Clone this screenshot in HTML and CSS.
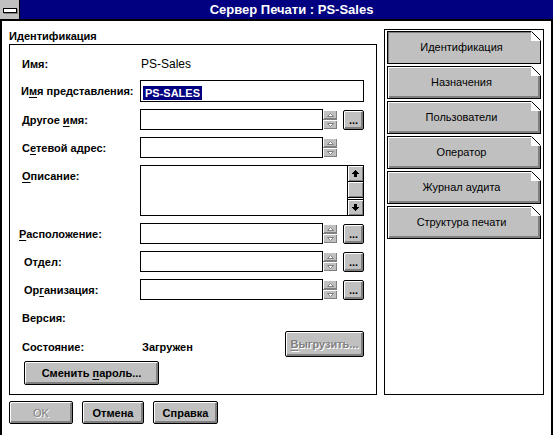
FILE: index.html
```html
<!DOCTYPE html>
<html lang="ru">
<head>
<meta charset="utf-8">
<title>Сервер Печати : PS-Sales</title>
<link rel="stylesheet" href="styles.css">
</head>
<body>
<div class="window">
  <div class="titlebar">
    <div class="sysmenu"><span class="sysbar"></span></div>
    <div class="title">Сервер Печати : PS-Sales</div>
  </div>
  <div class="client">
    <div class="left">
      <div class="group-label">Идентификация</div>
      <div class="group">
        <div class="row r-name"><span class="lbl">Имя:</span><span class="val">PS-Sales</span></div>
        <div class="row r-wide"><span class="lbl l-m1">И<u>м</u>я представления:</span><div class="field wide"><span class="sel">PS-SALES</span></div></div>
        <div class="row"><span class="lbl">Другое <u>и</u>мя:</span><div class="field"></div><div class="spin"><span class="spin-b"><svg width="7" height="4" viewBox="0 0 7 4"><path d="M3.5 0.5L6.5 3.5H0.5Z" fill="#fff" stroke="#808080"/></svg></span><span class="spin-b"><svg width="7" height="4" viewBox="0 0 7 4"><path d="M0.5 0.5H6.5L3.5 3.5Z" fill="#fff" stroke="#808080"/></svg></span></div><button class="btn ell">...</button></div>
        <div class="row"><span class="lbl">С<u>е</u>тевой адрес:</span><div class="field"></div><div class="spin"><span class="spin-b"><svg width="7" height="4" viewBox="0 0 7 4"><path d="M3.5 0.5L6.5 3.5H0.5Z" fill="#fff" stroke="#808080"/></svg></span><span class="spin-b"><svg width="7" height="4" viewBox="0 0 7 4"><path d="M0.5 0.5H6.5L3.5 3.5Z" fill="#fff" stroke="#808080"/></svg></span></div></div>
        <div class="row r-desc"><span class="lbl l-top"><u>О</u>писание:</span>
          <div class="memo">
            <div class="sb">
              <span class="sb-btn sb-up"><svg width="7" height="7" viewBox="0 0 7 7" shape-rendering="crispEdges"><path d="M3 0h1v1h1v1h1v1h1v1H5v3H2V4H0V3h1V2h1V1h1z"/></svg></span>
              <span class="sb-thumb"></span>
              <span class="sb-track"></span>
              <span class="sb-btn sb-down"><svg width="7" height="7" viewBox="0 0 7 7" shape-rendering="crispEdges"><path d="M2 0h3v3h2v1H6v1H5v1H4v1H3V6H2V5H1V4H0V3h2z"/></svg></span>
            </div>
          </div>
        </div>
        <div class="row"><span class="lbl l-m3"><u>Р</u>асположение:</span><div class="field"></div><div class="spin"><span class="spin-b"><svg width="7" height="4" viewBox="0 0 7 4"><path d="M3.5 0.5L6.5 3.5H0.5Z" fill="#fff" stroke="#808080"/></svg></span><span class="spin-b"><svg width="7" height="4" viewBox="0 0 7 4"><path d="M0.5 0.5H6.5L3.5 3.5Z" fill="#fff" stroke="#808080"/></svg></span></div><button class="btn ell">...</button></div>
        <div class="row"><span class="lbl l-p2">От<u>д</u>ел:</span><div class="field"></div><div class="spin"><span class="spin-b"><svg width="7" height="4" viewBox="0 0 7 4"><path d="M3.5 0.5L6.5 3.5H0.5Z" fill="#fff" stroke="#808080"/></svg></span><span class="spin-b"><svg width="7" height="4" viewBox="0 0 7 4"><path d="M0.5 0.5H6.5L3.5 3.5Z" fill="#fff" stroke="#808080"/></svg></span></div><button class="btn ell">...</button></div>
        <div class="row"><span class="lbl l-p2">Ор<u>г</u>анизация:</span><div class="field"></div><div class="spin"><span class="spin-b"><svg width="7" height="4" viewBox="0 0 7 4"><path d="M3.5 0.5L6.5 3.5H0.5Z" fill="#fff" stroke="#808080"/></svg></span><span class="spin-b"><svg width="7" height="4" viewBox="0 0 7 4"><path d="M0.5 0.5H6.5L3.5 3.5Z" fill="#fff" stroke="#808080"/></svg></span></div><button class="btn ell">...</button></div>
        <div class="row"><span class="lbl">Версия:</span></div>
        <div class="row r-state"><span class="lbl l-low">Состояние:</span><span class="val-b l-low">Загружен</span><button class="btn btn-unload" disabled><u>В</u>ыгрузить...</button></div>
        <div class="row r-pass"><button class="btn btn-pass">Сменить <u>п</u>ароль...</button></div>
      </div>
      <div class="dlg-buttons">
        <button class="btn btn-ok" disabled>OK</button>
        <button class="btn btn-cancel">Отмена</button>
        <button class="btn btn-help">Справка</button>
      </div>
    </div>
    <div class="tabs">
      <div class="tab selected">Идентификация<svg class="ear" width="10" height="10" viewBox="0 0 10 10"><path d="M0 0H10V10H0Z" fill="#fff"/><path d="M0.5 0.5L9.5 9.5" stroke="#000"/></svg></div>
      <div class="tab">Назначения<svg class="ear" width="10" height="10" viewBox="0 0 10 10"><path d="M0 0H10V10H0Z" fill="#fff"/><path d="M0.5 0.5L9.5 9.5" stroke="#000"/></svg></div>
      <div class="tab">Пользователи<svg class="ear" width="10" height="10" viewBox="0 0 10 10"><path d="M0 0H10V10H0Z" fill="#fff"/><path d="M0.5 0.5L9.5 9.5" stroke="#000"/></svg></div>
      <div class="tab">Оператор<svg class="ear" width="10" height="10" viewBox="0 0 10 10"><path d="M0 0H10V10H0Z" fill="#fff"/><path d="M0.5 0.5L9.5 9.5" stroke="#000"/></svg></div>
      <div class="tab">Журнал аудита<svg class="ear" width="10" height="10" viewBox="0 0 10 10"><path d="M0 0H10V10H0Z" fill="#fff"/><path d="M0.5 0.5L9.5 9.5" stroke="#000"/></svg></div>
      <div class="tab">Структура печати<svg class="ear" width="10" height="10" viewBox="0 0 10 10"><path d="M0 0H10V10H0Z" fill="#fff"/><path d="M0.5 0.5L9.5 9.5" stroke="#000"/></svg></div>
    </div>
  </div>
</div>
</body>
</html>
```
FILE: styles.css
```css
* { box-sizing: border-box; }
html, body { margin: 0; padding: 0; background: #fff; }
body { font-family: "Liberation Sans", Arial, sans-serif; font-size: 11px; color: #000; }
u { text-decoration-thickness: 1px; text-underline-offset: 2px; }

.window { width: 553px; height: 435px; overflow: hidden; background: #fff; }

.titlebar { display: flex; height: 21px; background: #000080; border-bottom: 2px solid #000; }
.sysmenu { width: 20px; height: 19px; background: #c0c0c0; border-right: 1px solid #000; padding: 8px 0 0 3px; }
.sysbar { display: block; width: 14px; height: 5px; background: #fff; border: 1px solid #000; box-shadow: 1px 1px 0 #808080; }
.title { flex: 1; color: #fff; font-weight: bold; font-size: 13px; line-height: 19px; text-align: center; padding-left: 10px; white-space: nowrap; }

.client { display: flex; align-items: flex-start; height: 414px; border-left: 2px solid #000; border-right: 2px solid #000; padding: 8px 0 0 7px; }

.left { width: 368px; flex: none; }
.group-label { font-weight: bold; height: 15px; line-height: 15px; }
.group { border: 1px solid #000; height: 351px; padding-top: 9px; }

.row { display: flex; align-items: center; height: 21px; margin-top: 7px; padding: 0 12px; }
.r-name { margin-top: 0; height: 20px; }
.r-wide { margin-top: 6px; height: 22px; }
.r-desc { height: 51px; align-items: flex-start; }
.r-state { margin-top: 3px; height: 26px; }
.r-pass { margin-top: 4px; height: 24px; padding-left: 14px; }

.lbl { width: 118px; flex: none; font-weight: bold; white-space: nowrap; }
.l-m1 { margin-left: -1px; width: 119px; }
.l-m3 { margin-left: -3px; width: 121px; }
.l-p2 { margin-left: 2px; width: 116px; }
.l-top { padding-top: 5px; }
.l-low { padding-top: 6px; }

.val { font-size: 12px; padding-left: 1px; }
.val-b { font-weight: bold; padding-left: 2px; }

.field { width: 183px; height: 100%; border: 1px solid #000; background: #fff; flex: none; }
.field.wide { width: 224px; padding: 5px 0 0 2px; }
.sel { display: inline-block; height: 14px; line-height: 14px; padding: 0 2px; background: #000080; color: #fff; font-weight: bold; }

.spin { width: 14px; height: 19px; display: flex; flex-direction: column; flex: none; }
.spin-b { flex: 1; display: flex; align-items: center; justify-content: center; background: #c0c0c0; box-shadow: inset 1px 1px 0 #fff, inset -1px -1px 0 #808080; }
.spin-b + .spin-b { border-top: 1px solid #808080; }

.btn { font-family: "Liberation Sans", Arial, sans-serif; font-size: 11px; font-weight: bold; color: #000; background: #c0c0c0; border: 1px solid #000; border-radius: 2px; box-shadow: inset 1px 1px 0 #fff, inset -2px -2px 0 #808080; padding: 0; margin: 0; flex: none; }
.btn:disabled { color: #808080; text-shadow: 1px 1px 0 #fff; }
.ell { width: 21px; height: 20px; margin-left: 6px; line-height: 16px; }
.btn-unload { margin-left: auto; width: 79px; height: 26px; }
.btn-pass { width: 135px; height: 24px; }

.memo { width: 224px; height: 51px; border: 1px solid #000; background: #fff; display: flex; justify-content: flex-end; }
.sb { width: 16px; border-left: 1px solid #000; display: flex; flex-direction: column; }
.sb-btn { height: 16px; display: flex; align-items: center; justify-content: center; background: #c0c0c0; box-shadow: inset 1px 1px 0 #fff, inset -1px -1px 0 #808080; }
.sb-up { border-bottom: 1px solid #000; }
.sb-down { border-top: 1px solid #000; }
.sb-thumb { height: 16px; background: #c0c0c0; border-bottom: 1px solid #000; box-shadow: inset 1px 1px 0 #fff, inset -1px -1px 0 #808080; }
.sb-track { flex: 1; background: #fff; }

.dlg-buttons { display: flex; margin-top: 6px; }
.dlg-buttons .btn { height: 23px; }
.btn-ok { width: 64px; font-weight: normal; }
.btn-cancel { width: 62px; margin-left: 9px; }
.btn-help { width: 65px; margin-left: 9px; }

.tabs { width: 160px; height: 366px; margin-left: 7px; flex: none; border: 1px solid #000; padding: 1px 2px 0; }
.tab { position: relative; height: 33px; margin-bottom: 2px; border: 1px solid #000; background: #c0c0c0; box-shadow: inset 1px 1px 0 #fff, inset -2px -2px 0 #808080; text-align: center; line-height: 31px; font-size: 11px; padding-right: 5px; white-space: nowrap; }
.tab.selected { box-shadow: inset 1px 1px 0 #808080; }
.ear { position: absolute; top: -1px; right: -1px; display: block; }
```
